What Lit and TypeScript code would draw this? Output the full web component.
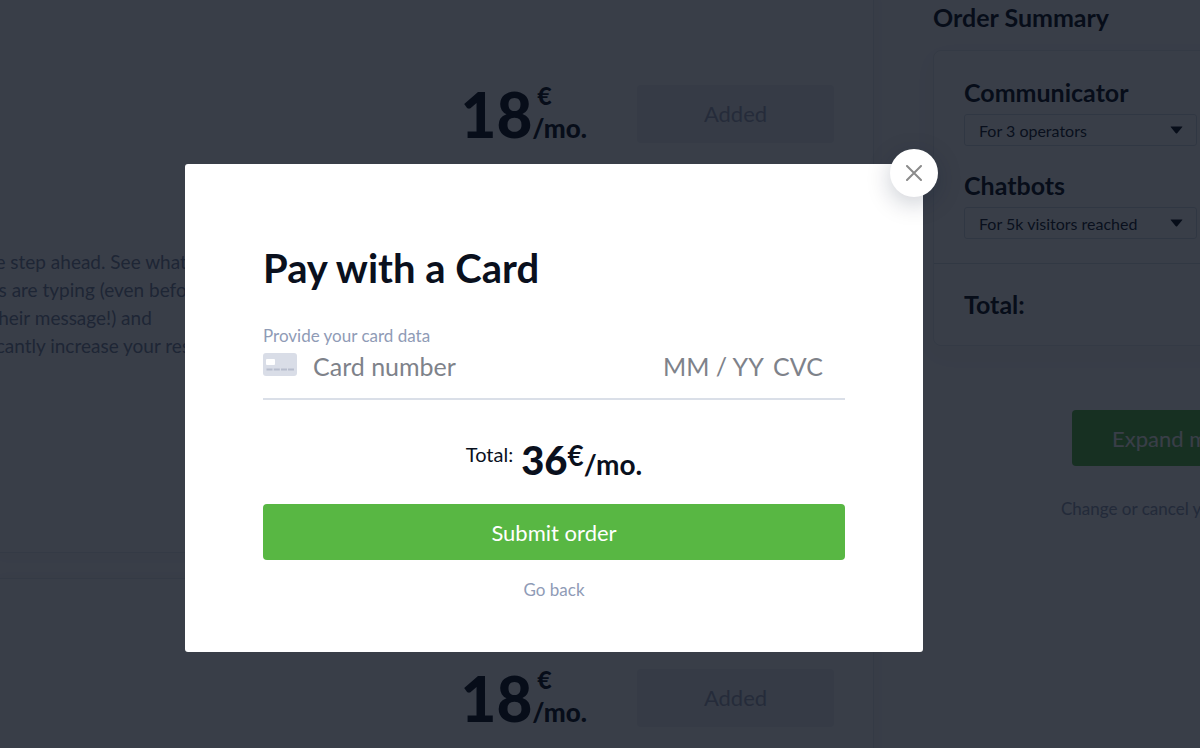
import { LitElement, html, css } from "lit";
import { customElement, property } from "lit/decorators.js";

@customElement("price-tag")
class PriceTag extends LitElement {
  @property() amount = "";

  static styles = css`
    :host {
      display: flex;
      color: #050a16;
      font-family: "Lato Black", Lato, sans-serif;
      font-weight: 900;
    }
    .amount {
      font-size: 62px;
      line-height: 62px;
    }
    .unit {
      display: flex;
      flex-direction: column;
      justify-content: space-between;
    }
    .currency {
      padding-left: 5px;
      font-size: 25px;
      line-height: 24px;
    }
    .period {
      font-size: 26px;
      line-height: 34px;
    }
  `;

  render() {
    return html`
      <span class="amount">${this.amount}</span>
      <span class="unit">
        <span class="currency">€</span>
        <span class="period">/mo.</span>
      </span>
    `;
  }
}

@customElement("product-card")
class ProductCard extends LitElement {
  static styles = css`
    :host {
      display: flex;
      flex-direction: column;
      box-sizing: border-box;
      height: 559px;
      padding: 90px 39px 0 0;
      border: 1px solid #e6eaf0;
      border-left: 0;
      background: #fff;
      box-shadow: 0 2px 12px rgba(20, 30, 60, 0.04);
    }
    .row {
      display: flex;
      justify-content: flex-end;
      align-items: center;
      gap: 50px;
      height: 58px;
    }
    .added {
      width: 197px;
      height: 58px;
      border: 0;
      border-radius: 4px;
      background: #edf0f3;
      color: #9ca1b7;
      font: 400 22px/56px Lato, sans-serif;
    }
    .text {
      margin: 105px 0 0 -53px;
      color: #7b859f;
      font-size: 19px;
      line-height: 28px;
      white-space: pre-line;
    }
  `;

  @property() text = "";

  render() {
    return html`
      <div class="row">
        <price-tag amount="18"></price-tag>
        <button class="added" disabled>Added</button>
      </div>
      ${this.text ? html`<p class="text">${this.text}</p>` : null}
    `;
  }
}

@customElement("order-summary")
class OrderSummary extends LitElement {
  static styles = css`
    :host {
      display: block;
      box-sizing: border-box;
      padding: 1px 0 0 59px;
      color: #050a16;
      white-space: nowrap;
      overflow: hidden;
    }
    h2,
    .name {
      margin: 0;
      font-size: 25px;
      line-height: 32px;
      font-weight: 700;
    }
    .name {
      display: block;
    }
    .panel {
      width: 360px;
      margin-top: 17px;
      border: 1px solid #e4e8ee;
      border-radius: 8px;
      background: #fff;
      box-shadow: 0 8px 24px rgba(20, 30, 60, 0.03);
    }
    .items {
      display: grid;
      gap: 23px;
      padding: 25px 0 24px 30px;
      border-bottom: 1px solid #d8dfe6;
    }
    .pick {
      position: relative;
      width: 233px;
      margin-top: 6px;
    }
    select {
      display: block;
      box-sizing: border-box;
      width: 100%;
      height: 32px;
      padding: 2px 14px 0;
      appearance: none;
      border: 1px solid #d3dae3;
      border-radius: 3px;
      background: #fff;
      color: #10182a;
      font: 400 16px/28px Lato, sans-serif;
    }
    .arrow {
      position: absolute;
      right: 14px;
      top: 12px;
    }
    .total {
      padding: 24px 30px 25px;
      font-size: 25px;
      line-height: 32px;
      font-weight: 700;
    }
    .expand {
      display: block;
      width: 260px;
      height: 56px;
      margin: 64px 0 0 139px;
      padding: 2px 0 0 40px;
      border: 0;
      border-radius: 4px;
      background: #58b743;
      color: #fff;
      font: 400 22px/54px Lato, sans-serif;
      text-align: left;
    }
    .note {
      margin: 31px 0 0 128px;
      color: #8f9bb6;
      font-size: 17px;
      line-height: 24px;
    }
  `;

  private pick(id: string, name: string, value: string) {
    return html`
      <div>
        <label class="name" for=${id}>${name}</label>
        <div class="pick">
          <select id=${id}>
            <option>${value}</option>
          </select>
          <svg class="arrow" width="13" height="8" viewBox="0 0 13 8" aria-hidden="true">
            <path d="M1 .5h11q.8 0 .3.6L7.2 7.2q-.7.7-1.4 0L.7 1.100Q.2.5 1 .5z" fill="#050a16" />
          </svg>
        </div>
      </div>
    `;
  }

  render() {
    return html`
      <h2>Order Summary</h2>
      <div class="panel">
        <div class="items">
          ${this.pick("operators", "Communicator", "For 3 operators")}
          ${this.pick("visitors", "Chatbots", "For 5k visitors reached")}
        </div>
        <div class="total">Total:</div>
      </div>
      <button class="expand">Expand my plan</button>
      <p class="note">Change or cancel your plan</p>
    `;
  }
}

@customElement("card-dialog")
class CardDialog extends LitElement {
  static styles = css`
    :host {
      position: relative;
      display: block;
      box-sizing: border-box;
      width: 738px;
      max-width: 100%;
      padding: 80px 78px 50px;
      border-radius: 3px;
      background: #fff;
      color: #0a101d;
    }
    .close {
      position: absolute;
      top: -15px;
      right: -15px;
      display: grid;
      place-items: center;
      width: 48px;
      height: 48px;
      padding: 0;
      border: 0;
      border-radius: 50%;
      background: #fff;
      box-shadow: 0 6px 24px rgba(10, 25, 50, 0.22);
    }
    h1 {
      margin: 0;
      font-size: 40px;
      line-height: 48px;
      font-weight: 700;
    }
    .hint {
      display: block;
      margin-top: 32px;
      color: #8f9bb6;
      font-size: 17px;
      line-height: 24px;
    }
    .fields {
      display: flex;
      align-items: center;
      height: 52px;
      box-sizing: border-box;
      padding: 0 20px 15px 0;
      border-bottom: 2px solid #dadfe8;
    }
    .card {
      flex: none;
      align-self: flex-start;
      margin: 5px 16px 0 0;
    }
    input {
      min-width: 0;
      padding: 0;
      border: 0;
      outline: 0;
      background: none;
      color: #0a101d;
      font: 400 25px/34px Lato, sans-serif;
    }
    input::placeholder {
      color: #7e828a;
      opacity: 1;
    }
    .number {
      flex: 1;
    }
    .expiry {
      width: 110px;
    }
    .cvc {
      width: 52px;
    }
    .total {
      display: flex;
      justify-content: center;
      align-items: flex-start;
      height: 48px;
      margin-top: 36px;
      font-weight: 700;
      font-size: 28px;
      line-height: 48px;
    }
    .label {
      margin-right: 8px;
      font-weight: 400;
      font-size: 20px;
      line-height: 36px;
    }
    .amount {
      font-family: "Lato Black", Lato, sans-serif;
      font-weight: 900;
      font-size: 40px;
    }
    .currency {
      line-height: 38px;
    }
    .period {
      line-height: 56px;
    }
    .submit {
      display: block;
      width: 100%;
      height: 56px;
      margin-top: 20px;
      padding: 2px 0 0;
      border: 0;
      border-radius: 4px;
      background: #58b743;
      color: #fff;
      font: 400 22px/54px Lato, sans-serif;
    }
    .back {
      display: block;
      margin: 18px auto 0;
      padding: 0;
      border: 0;
      background: none;
      color: #8f9bb6;
      font: 400 17px/24px Lato, sans-serif;
    }
  `;

  render() {
    return html`
      <button class="close" aria-label="Close">
        <svg width="16" height="16" viewBox="0 0 16 16" aria-hidden="true">
          <path d="M1 1l14 14M15 1L1 15" stroke="#8b8b8b" stroke-width="2" stroke-linecap="round" />
        </svg>
      </button>
      <h1>Pay with a Card</h1>
      <label class="hint" for="number">Provide your card data</label>
      <div class="fields">
        <svg class="card" width="34" height="23" viewBox="0 0 34 23" aria-hidden="true">
          <rect width="34" height="23" rx="3" fill="#d9dde7" />
          <rect x="3" y="6" width="9" height="6" rx="1" fill="#fff" />
          <path
            d="M3.500 16.500h6M10.800 16.500h6M18 16.500h6M25 16.500h6"
            stroke="#b7bdcd"
            stroke-width="2"
          />
        </svg>
        <input class="number" id="number" placeholder="Card number" />
        <input class="expiry" aria-label="Expiry date" placeholder="MM / YY" />
        <input class="cvc" aria-label="Security code" placeholder="CVC" />
      </div>
      <div class="total">
        <span class="label">Total:</span>
        <span class="amount">36</span>
        <span class="currency">€</span>
        <span class="period">/mo.</span>
      </div>
      <button class="submit">Submit order</button>
      <button class="back">Go back</button>
    `;
  }
}

@customElement("app-root")
class AppRoot extends LitElement {
  static styles = css`
    :host {
      position: relative;
      display: block;
      height: 100vh;
      overflow: hidden;
      background: #fcfcfd;
      font-family: Lato, sans-serif;
    }
    .page {
      display: grid;
      grid-template-columns: minmax(0, 1fr) 326px;
    }
    .products {
      display: grid;
      gap: 25px;
      margin-top: -6px;
    }
    .overlay {
      position: absolute;
      inset: 0;
      display: flex;
      justify-content: center;
      align-items: center;
      padding: 68px 92px 0 0;
      background: rgba(8, 14, 26, 0.8);
    }
  `;

  render() {
    const text = [
      "Be one step ahead. See what",
      "visitors are typing (even before",
      "send their message!) and",
      "significantly increase your response",
    ].join("\n");
    return html`
      <div class="page">
        <main class="products">
          <product-card .text=${text}></product-card>
          <product-card></product-card>
        </main>
        <order-summary></order-summary>
      </div>
      <div class="overlay">
        <card-dialog role="dialog" aria-modal="true" aria-label="Pay with a Card"></card-dialog>
      </div>
    `;
  }
}
